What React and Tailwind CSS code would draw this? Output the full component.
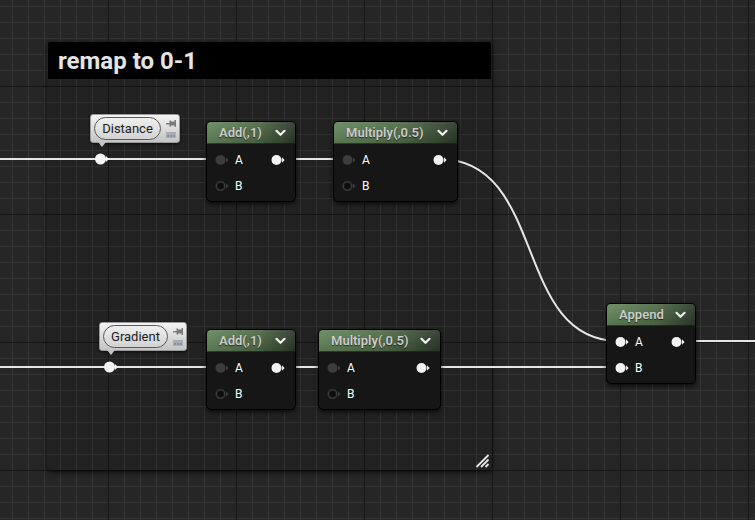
import React from "react";

function Pin({ variant }) {
  const fill = variant === "white" ? "#f2f2f2" : "#3c3c3c";
  return (
    <svg width="16" height="12" viewBox="0 0 16 12" className="shrink-0 block">
      {variant === "hollow" ? (
        <circle cx="5.5" cy="6" r="4.2" fill="#0e0e0e" stroke="#3c3c3c" strokeWidth="1.6" />
      ) : (
        <circle cx="5.5" cy="6" r="5" fill={fill} />
      )}
      <path d="M11 3.3 L13.6 6 L11 8.7 Z" fill={fill} />
    </svg>
  );
}

function Chevron() {
  return (
    <svg width="11" height="8" viewBox="0 0 11 8" className="block">
      <path d="M1.5 1.8 L5.5 5.8 L9.5 1.8" fill="none" stroke="#f0f0f0" strokeWidth="2.2" strokeLinecap="round" strokeLinejoin="round" />
    </svg>
  );
}

function Node({ className, title, inA, inB }) {
  return (
    <div
      className={
        "absolute rounded-[5px] bg-[#151615] border border-black shadow-[0_2px_5px_rgba(0,0,0,0.7)] overflow-hidden " +
        className
      }
    >
      <div className="h-[22px] flex items-center justify-between pl-[12px] pr-[9px] bg-[linear-gradient(to_bottom,rgba(255,255,255,0.08),rgba(0,0,0,0.12)),linear-gradient(to_right,#66875c,#506c48_55%,#2c3a2a)] border-b border-black/60">
        <span className="text-[13px] font-semibold text-[#cccccc] leading-none [text-shadow:0_1px_1px_rgba(0,0,0,0.6)] whitespace-nowrap">
          {title}
        </span>
        <Chevron />
      </div>
      <div className="pt-[3px] pb-[2px]">
        <div className="h-[26px] flex items-center justify-between pl-[8px] pr-[8px]">
          <div className="flex items-center">
            <Pin variant={inA} />
            <span className="ml-[4px] text-[12px] text-white leading-none">A</span>
          </div>
          <Pin variant="white" />
        </div>
        <div className="h-[26px] flex items-center pl-[8px]">
          <Pin variant={inB} />
          <span className="ml-[4px] text-[12px] text-white leading-none">B</span>
        </div>
      </div>
    </div>
  );
}

function ParamBubble({ className, label }) {
  return (
    <div
      className={
        "absolute h-[29px] rounded-[3px] bg-[linear-gradient(to_bottom,#f4f4f4,#c4c4c4)] border border-[#9a9a9a] shadow-[0_1px_3px_rgba(0,0,0,0.6)] flex items-center pl-[3px] pr-[3px] gap-[5px] " +
        className
      }
    >
      <div className="h-[23px] flex-1 rounded-full border border-[#5a5a5a] bg-[linear-gradient(to_bottom,#efefef,#d2d2d2)] flex items-center justify-center">
        <span className="text-[13px] text-[#202020] leading-none">{label}</span>
      </div>
      <div className="flex flex-col items-center gap-[5px] w-[10px]">
        <svg width="10" height="7" viewBox="0 0 10 7" className="block">
          <rect x="0" y="3" width="4" height="1.4" fill="#7a7a7a" />
          <rect x="3.5" y="0.5" width="1.6" height="6" fill="#7a7a7a" />
          <rect x="5" y="1.5" width="4" height="4" fill="#7a7a7a" />
          <rect x="8.5" y="0" width="1.5" height="7" fill="#7a7a7a" />
        </svg>
        <svg width="10" height="6" viewBox="0 0 10 6" className="block">
          <rect x="0" y="0" width="10" height="6" fill="#a9adb5" />
          <rect x="1.5" y="3.5" width="1.2" height="1" fill="#555" />
          <rect x="4.4" y="3.5" width="1.2" height="1" fill="#555" />
          <rect x="7.3" y="3.5" width="1.2" height="1" fill="#555" />
        </svg>
      </div>
      <div className="absolute left-[7px] top-[27px] w-0 h-0 border-l-[4px] border-r-[4px] border-t-[5px] border-l-transparent border-r-transparent border-t-[#c4c4c4]" />
    </div>
  );
}

export default function App() {
  return (
    <div className="relative w-[755px] h-[520px] overflow-hidden bg-[#262626] bg-[linear-gradient(to_right,#161616_1px,transparent_1px),linear-gradient(to_bottom,#161616_1px,transparent_1px),linear-gradient(to_right,#363636_1px,transparent_1px),linear-gradient(to_bottom,#363636_1px,transparent_1px)] [background-size:128px_128px,128px_128px,16px_16px,16px_16px] [background-position:108px_86px,108px_86px,12px_6px,12px_6px] font-['Roboto',sans-serif]">
      {/* Comment box */}
      <div className="absolute left-[47px] top-[41px] w-[445px] h-[429px] rounded-[4px] bg-black/[0.1] shadow-[0_2px_5px_rgba(0,0,0,0.7)] p-[1px] flex flex-col">
        <div className="h-[37px] bg-black rounded-t-[2px] flex items-center pl-[10px] pr-[3px]">
          <span className="text-[24px] font-bold text-[#e4e4e4] leading-none">remap to 0-1</span>
        </div>
        <svg width="16" height="14" viewBox="0 0 16 14" className="absolute right-[1px] bottom-[2px]">
          <path d="M1.5 13 L13.5 1" stroke="#e8e8e8" strokeWidth="1.8" />
          <path d="M6 13 L13.5 5.5" stroke="#e8e8e8" strokeWidth="1.8" />
          <path d="M10.5 13 L13.5 10" stroke="#e8e8e8" strokeWidth="1.8" />
        </svg>
      </div>

      {/* Wires */}
      <svg width="755" height="520" viewBox="0 0 755 520" className="absolute left-0 top-0 pointer-events-none">
        <g stroke="#e6e6e6" strokeWidth="2" fill="none">
          <path d="M0 159 L220 159" />
          <path d="M277 159 L347 159" />
          <path d="M439 159 C548 159 512 341 619 341" />
          <path d="M0 367 L220 367" />
          <path d="M277 367 L331 367" />
          <path d="M422 367 L619 367" />
          <path d="M679 341 L755 341" />
        </g>
        <g fill="#f4f4f4">
          <circle cx="100.5" cy="159" r="5.5" />
          <path d="M106 156 L109 159 L106 162 Z" />
          <circle cx="109.5" cy="367" r="5.5" />
          <path d="M115 364 L118 367 L115 370 Z" />
        </g>
      </svg>

      {/* Nodes */}
      <Node className="left-[206px] top-[121px] w-[90px]" title="Add(,1)" inA="dark" inB="hollow" />
      <Node className="left-[333px] top-[121px] w-[125px]" title="Multiply(,0.5)" inA="dark" inB="hollow" />
      <Node className="left-[206px] top-[329px] w-[90px]" title="Add(,1)" inA="dark" inB="hollow" />
      <Node className="left-[318px] top-[329px] w-[123px]" title="Multiply(,0.5)" inA="dark" inB="hollow" />
      <Node className="left-[606px] top-[303px] w-[90px]" title="Append" inA="white" inB="white" />

      {/* Parameter bubbles */}
      <ParamBubble className="left-[90px] top-[114px] w-[90px]" label="Distance" />
      <ParamBubble className="left-[99px] top-[322px] w-[88px]" label="Gradient" />
    </div>
  );
}
